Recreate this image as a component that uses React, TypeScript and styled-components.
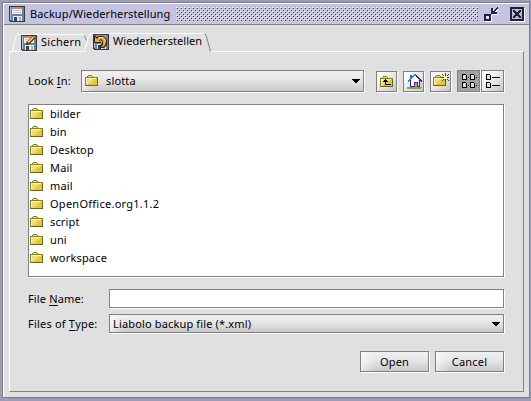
import React from 'react';
import styled, { createGlobalStyle, css } from 'styled-components';

const Global = createGlobalStyle`
  * { box-sizing: border-box; }
  html, body { margin: 0; padding: 0; }
  body { background: #9c9cb8; overflow: hidden; }
  svg { display: block; flex: none; }
`;

const Desktop = styled.div`
  width: 531px;
  height: 401px;
  padding: 2px 1px 3px 2px;
  background: #9c9cb8;
  font: 11px/14px "Noto Sans", "DejaVu Sans", sans-serif;
  color: #000;
`;

const Window = styled.div`
  display: flex;
  flex-direction: column;
  width: 528px;
  height: 396px;
  border: 1px solid #808080;
  background: #e0e0e0;
  box-shadow: inset 1px 1px #fff;
`;

const TitleBar = styled.header`
  display: flex;
  align-items: center;
  height: 21px;
  margin: 1px 0 0 1px;
  padding: 0 4px 0 5px;
  border-bottom: 1px solid #808080;
  background: #c4c4e0;
`;

const Label = styled.span<{ $track?: number }>`
  white-space: pre;
  letter-spacing: ${p => p.$track ?? 0.15}px;
`;

const WindowTitle = styled(Label)`
  width: 146px;
  margin-left: 5px;
`;

const WindowButtons = styled.div`
  display: flex;
  gap: 11px;
  margin-left: 6px;
`;

const TabRow = styled.nav`
  display: flex;
  height: 26px;
  padding: 9px 0 0 8px;
`;

const Tab = styled.div<{ $w: number; $pad: number; $active?: boolean }>`
  position: relative;
  display: flex;
  gap: 4px;
  width: ${p => p.$w}px;
  height: 18px;
  padding-left: ${p => p.$pad}px;
  padding-top: ${p => (p.$active ? 0 : 1)}px;
`;

const TabOutline = styled.svg`
  position: absolute;
  left: 0;
  top: 0;
  overflow: visible;
`;

const TabPane = styled.main`
  display: flex;
  flex-direction: column;
  width: 515px;
  height: 341px;
  margin-left: 6px;
  padding: 18px 19px 0 18px;
  border: 1px solid #808080;
  border-top-color: #fff;
  border-left-color: #fff;
`;

const etched = css`
  border: 1px solid #808080;
  box-shadow: 1px 1px #fff;
`;

const shaded = css`
  background: linear-gradient(90deg, rgba(255,255,255,.6), rgba(255,255,255,0) 14px),
    linear-gradient(180deg, #f0f0f0, #e6e6e6 45%, #c8c8c8);
`;

const Toolbar = styled.div`
  display: flex;
  align-items: center;
  height: 22px;
`;

const LookInLabel = styled(Label)`
  width: 53px;
`;

const Combo = styled.div<{ $w: number; $h: number }>`
  ${etched}
  ${shaded}
  display: flex;
  align-items: center;
  justify-content: space-between;
  width: ${p => p.$w}px;
  height: ${p => p.$h}px;
  padding: 0 3px;
`;

const ComboValue = styled.div`
  display: flex;
  align-items: center;
  gap: 8px;
`;

const Arrow = styled.svg<{ $top: number }>`
  align-self: flex-start;
  margin-top: ${p => p.$top}px;
`;

const IconButtons = styled.div`
  display: flex;
  gap: 6px;
  margin-left: 12px;
  padding-top: 1px;
`;

const IconButton = styled.button`
  ${etched}
  display: grid;
  place-items: center;
  width: 21px;
  height: 21px;
  padding: 0;
  background: linear-gradient(135deg, #fafafa 20%, #e2e2e2 60%, #c4c4c4);
  svg { overflow: visible; }
`;

const ViewToggle = styled.div`
  display: flex;
  gap: 1px;
  margin-left: 6px;
`;

const ToggleButton = styled(IconButton)<{ $on?: boolean }>`
  width: 23px;
  height: 22px;
  ${p => p.$on && 'background: #a2a2a2;'}
`;

const FileList = styled.ul`
  ${etched}
  width: 476px;
  height: 173px;
  margin: 12px 0 0;
  padding: 0 0 0 1px;
  background: #fff;
  list-style: none;
`;

const FileRow = styled.li`
  display: flex;
  align-items: center;
  gap: 7px;
  height: 18px;
`;

const FieldRow = styled.div<{ $top: number }>`
  display: flex;
  align-items: center;
  width: 476px;
  margin-top: ${p => p.$top}px;
`;

const FieldLabel = styled(Label)`
  width: 81px;
`;

const TextField = styled.input`
  ${etched}
  width: 395px;
  height: 19px;
  padding: 0 3px;
  background: #fff;
  font: inherit;
`;

const Mnemonic = styled.span`
  border-bottom: 1px solid #000;
  display: inline-block;
  height: 14px;
`;

const Actions = styled.footer`
  display: flex;
  justify-content: flex-end;
  gap: 6px;
  width: 476px;
  margin-top: 18px;
`;

const ActionButton = styled.button`
  ${etched}
  ${shaded}
  width: 69px;
  height: 21px;
  padding: 0;
  color: #000;
  font: inherit;
  letter-spacing: 0.2px;
`;

function FloppyIcon({ overlay }: { overlay?: 'pencil' | 'undo' }) {
  return (
    <svg width="16" height="16" viewBox="0 0 16 16" shapeRendering="crispEdges">
      <path d="M0 0h16v16H1l-1-1z" fill="#303840" />
      <path d="M1 1h14v14H2l-1-1z" fill="#6684a0" />
      <path d="M1 1h1v13H1z" fill="#a8c4d4" />
      <path d="M3 1h10v7H3z" fill="#f4f0ec" />
      <path d="M3 1h10v2H3z" fill="#dc8070" />
      <path d="M4 4h8v1H4zM4 6h8v1H4z" fill="#c8c8cc" />
      <path d="M4 10h9v5H4z" fill="#e4e8ec" />
      <path d="M5 11h3v4H5z" fill="#344454" />
      <path d="M10 11h2v4h-2z" fill="#a6b0b8" />
      {overlay === 'pencil' && (
        <g shapeRendering="auto">
          <path d="M5 10l1-3.5L12.5 0 15 2.5 8.5 9z" fill="#302818" />
          <path d="M7 7.5L12.5 2" stroke="#ffcf38" strokeWidth="1.8" />
          <path d="M12.5 1l1.5 1.5" stroke="#e28a64" strokeWidth="1.2" />
        </g>
      )}
      {overlay === 'undo' && (
        <g shapeRendering="auto">
          <path d="M1 1l3 2 2-1h4l3 2 1 3v4l-3 3H7v-3l2-1V7L7 6l1 3H1z" fill="#302810" />
          <path d="M2 3l2 2 2-2h4l2 2 1 3-1 3-2 2H8l2-2V7L8 5 6 6l1 2H2z" fill="#e8ac30" />
          <path d="M5 4.5l2-1h3l2 2v2" stroke="#ffe490" fill="none" />
        </g>
      )}
    </svg>
  );
}

function FolderShape() {
  return (
    <>
      <path d="M2 1h1V0h4v1h1v1h5v9H0V2h2z" fill="#84841c" />
      <path d="M3 1h4v1H3z" fill="#f2e47c" />
      <path d="M1 3h11v7H1z" fill="#e2c43e" />
      <path d="M1 3h8v1H8v1H7v1H6v1H5v1H4v1H3v1H1z" fill="#f6dc80" />
      <path d="M1 3h10v1H1zM1 3h1v6H1z" fill="#fff4ac" />
      <path d="M9 4h1v1H9zM8 5h1v1H8zM7 6h1v1H7zM6 7h1v1H6zM5 8h1v1H5z" fill="#f4dc84" />
      <path d="M12 4h1v7H1v-1h11z" fill="#66662c" />
    </>
  );
}

const FolderIcon = () => (
  <svg width="13" height="12" viewBox="0 0 13 12" shapeRendering="crispEdges"><FolderShape /></svg>
);

const UpIcon = () => (
  <svg width="13" height="11" viewBox="0 0 13 11" shapeRendering="crispEdges">
    <FolderShape />
    <path d="M5 3h1v1h1v1h1v1H6v2h5v1H5V6H3V5h1V4h1z" fill="#000" />
  </svg>
);

const HomeIcon = () => (
  <svg width="17" height="17" viewBox="-2 0 17 17" shapeRendering="crispEdges">
    <path d="M0 14h15v1h-1v1H0z" fill="#68b838" />
    <path d="M3 8l5-5 5 5v6H3z" fill="#fff" />
    <path d="M3 7h1v7H3zM12 7h1v7h-1zM3 13h10v1H3z" fill="#24248c" />
    <path d="M3 2h2v3H3z" fill="#287090" />
    <path d="M7 1h2v1h1v1h1v1h1v1h1v1h1v1h1v2h-1V8h-1V7h-1V6h-1V5h-1V4H9V3H7v1H6v1H5v1H4v1H3v1H2v1H1V7h1V6h1V5h1V4h1V3h1V2h1z" fill="#3488b0" />
    <path d="M9 2h1v1h1v1h1v1h1v1h1v1h1v2h-1V8h-1V7h-1V6h-1V5h-1V4H9z" fill="#242478" />
    <path d="M7 9h4v5H7z" fill="#701878" />
    <path d="M8 10h2v4H8z" fill="#d080c0" />
  </svg>
);

const NewFolderIcon = () => (
  <svg width="17" height="17" viewBox="-1 0 17 17" shapeRendering="crispEdges">
    <g transform="translate(0 2)"><FolderShape /></g>
    <path d="M12 0h1v9h-1zM8 4h8v1H8zM9 1h1v1H9zM10 2h1v1h-1zM14 2h1v1h-1zM15 1h1v1h-1zM10 6h1v1h-1zM9 7h1v1H9zM14 6h1v1h-1zM15 7h1v1h-1z" fill="#3c3c38" />
    <path d="M11 3h3v3h-3z" fill="#fff4a0" />
  </svg>
);

function TileMark({ x, y }: { x: number; y: number }) {
  return (
    <g transform={`translate(${x} ${y})`}>
      <path d="M0 0h4v1h1v5H0z" fill="#000" />
      <path d="M1 1h3v4H1z" fill="#dcdcf4" />
    </g>
  );
}

const ListViewIcon = () => (
  <svg width="15" height="14" viewBox="-1 0 15 14" shapeRendering="crispEdges">
    {[0, 8].flatMap(y => [0, 8].map(x => <TileMark key={`${x}-${y}`} x={x} y={y} />))}
    <path d="M6 3h1v1H6zM14 3h1v1h-1zM6 11h1v1H6zM14 11h1v1h-1z" />
  </svg>
);

const DetailsViewIcon = () => (
  <svg width="13" height="14" viewBox="0 0 13 14" shapeRendering="crispEdges">
    <TileMark x={0} y={0} /><TileMark x={0} y={8} />
    <path d="M6 3h8v1H6zM6 11h8v1H6z" />
  </svg>
);

const ComboArrow = ({ top }: { top: number }) => (
  <Arrow $top={top} width="8" height="4" viewBox="0 0 8 4" shapeRendering="crispEdges">
    <path d="M0 0h8v1H7v1H6v1H5v1H3V3H2V2H1V1H0z" />
  </Arrow>
);

const Bumps = () => (
  <svg width="302" height="14" shapeRendering="crispEdges">
    <defs>
      <pattern id="bumps" width="4" height="4" patternUnits="userSpaceOnUse">
        <path d="M0 0h1v1H0zM2 2h1v1H2z" fill="#fff" />
        <path d="M1 1h1v1H1zM3 3h1v1H3z" fill="#33335c" />
      </pattern>
    </defs>
    <rect width="302" height="14" fill="url(#bumps)" />
  </svg>
);

const IconifyIcon = () => (
  <svg width="15" height="16" viewBox="0 0 15 16" shapeRendering="crispEdges">
    <path d="M1 9h7v7H1zM9 3h1v3h1V5h1V4h1V3h1v2h-1v1h-1v1h-1v1h3v1H9z" fill="#fff" />
    <path d="M0 8h7v7H0z" fill="#20203c" />
    <path d="M2 10h3v3H2z" fill="#dedef0" />
    <path d="M7 2h2v3h1V4h1V3h1V2h1V1h1v2h-1v1h-1v1h-1v1h2v2H7z" fill="#20203c" />
  </svg>
);

const CloseIcon = () => (
  <svg width="15" height="16" viewBox="0 -1 15 16" shapeRendering="crispEdges">
    <path d="M1 1h14v14H1z" fill="#fff" />
    <path d="M0 0h14v14H0z" fill="#20203c" />
    <path d="M2 2h10v10H2z" fill="#b8b8d8" />
    <path d="M3 3h2v1h1v1h2V4h1V3h2v2h-1v1H9v2h1v1h1v2H9v-1H8V9H6v1H5v1H3V9h1V8h1V6H4V5H3z" fill="#20203c" />
  </svg>
);

const folders: [string, number][] = [
  ['bilder', 0.1], ['bin', 0.1], ['Desktop', 0.15], ['Mail', 0.15], ['mail', 0.15],
  ['OpenOffice.org1.1.2', 0.26], ['script', 0.15], ['uni', 0.1], ['workspace', 0.18],
];

export default function App() {
  return (
    <Desktop>
      <Global />
      <Window>
        <TitleBar>
          <FloppyIcon />
          <WindowTitle $track={0.1}>Backup/Wiederherstellung</WindowTitle>
          <Bumps />
          <WindowButtons><IconifyIcon /><CloseIcon /></WindowButtons>
        </TitleBar>
        <TabRow>
          <Tab $w={73} $pad={10}>
            <TabOutline width="76" height="18" fill="none">
              <path d="M1.5 17.5L5 2.5l2-2h66" stroke="#fff" />
              <path d="M73.5 1.5l2 5" stroke="#808080" />
            </TabOutline>
            <FloppyIcon overlay="pencil" />
            <Label $track={0.25}>Sichern</Label>
          </Tab>
          <Tab $w={128} $pad={9} $active>
            <TabOutline width="128" height="19" fill="none">
              <path d="M1 17h125v2H1z" fill="#e0e0e0" />
              <path d="M.5 17.5L4.5 2.5l2-3h114" stroke="#fff" />
              <path d="M121 -.5l1.5 3 4 15" stroke="#808080" />
            </TabOutline>
            <FloppyIcon overlay="undo" />
            <Label $track={0.04}>Wiederherstellen</Label>
          </Tab>
        </TabRow>
        <TabPane>
          <Toolbar>
            <LookInLabel $track={0.2}>Look <Mnemonic>I</Mnemonic>n:</LookInLabel>
            <Combo $w={283} $h={22}>
              <ComboValue><FolderIcon /><Label>slotta</Label></ComboValue>
              <ComboArrow top={8} />
            </Combo>
            <IconButtons>
              <IconButton><UpIcon /></IconButton>
              <IconButton><HomeIcon /></IconButton>
              <IconButton><NewFolderIcon /></IconButton>
            </IconButtons>
            <ViewToggle>
              <ToggleButton $on><ListViewIcon /></ToggleButton>
              <ToggleButton><DetailsViewIcon /></ToggleButton>
            </ViewToggle>
          </Toolbar>
          <FileList>
            {folders.map(([name, track]) => (
              <FileRow key={name}><FolderIcon /><Label $track={track}>{name}</Label></FileRow>
            ))}
          </FileList>
          <FieldRow $top={12}>
            <FieldLabel>File <Mnemonic>N</Mnemonic>ame:</FieldLabel>
            <TextField />
          </FieldRow>
          <FieldRow $top={6}>
            <FieldLabel $track={0.2}>Files of <Mnemonic>T</Mnemonic>ype:</FieldLabel>
            <Combo $w={395} $h={19}>
              <Label>Liabolo backup file (*.xml)</Label>
              <ComboArrow top={7} />
            </Combo>
          </FieldRow>
          <Actions>
            <ActionButton>Open</ActionButton>
            <ActionButton>Cancel</ActionButton>
          </Actions>
        </TabPane>
      </Window>
    </Desktop>
  );
}
